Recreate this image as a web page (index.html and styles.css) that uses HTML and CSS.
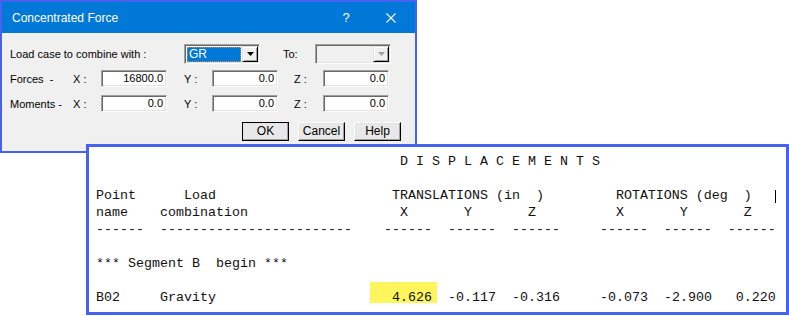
FILE: index.html
```html
<!DOCTYPE html>
<html>
<head>
<meta charset="utf-8">
<link rel="stylesheet" href="styles.css">
</head>
<body>
<div class="dialog">
  <div class="titlebar">
    <span class="title">Concentrated Force</span>
    <span class="help">?</span>
    <svg class="close" width="10" height="10" viewBox="0 0 10 10"><path d="M0.5 0.5L9.5 9.5M9.5 0.5L0.5 9.5" stroke="#fff" stroke-width="1.1" fill="none"/></svg>
  </div>
  <div class="body">
    <div class="row row1">
      <span class="lbl-load">Load case to combine with :</span>
      <div class="combo">
        <span class="sel">GR</span>
        <span class="dd"><svg width="7" height="4" viewBox="0 0 7 4"><path d="M0 0H7L3.5 4Z" fill="#000"/></svg></span>
      </div>
      <span class="lbl-to">To:</span>
      <div class="combo disabled">
        <span class="sel"></span>
        <span class="dd"><svg width="7" height="4" viewBox="0 0 7 4"><path d="M0 0H7L3.5 4Z" fill="#a0a0a0"/></svg></span>
      </div>
    </div>
    <div class="grid row2">
      <span>Forces &nbsp;-</span><span>X :</span><span class="edit">16800.0</span>
      <span class="pad-y">Y :</span><span class="edit">0.0</span>
      <span class="pad-z">Z :</span><span class="edit">0.0</span>
    </div>
    <div class="grid row3">
      <span>Moments -</span><span>X :</span><span class="edit">0.0</span>
      <span class="pad-y">Y :</span><span class="edit">0.0</span>
      <span class="pad-z">Z :</span><span class="edit">0.0</span>
    </div>
    <div class="buttons">
      <span class="btn default">OK</span>
      <span class="btn">Cancel</span>
      <span class="btn">Help</span>
    </div>
  </div>
</div>
<div class="panel">
  <div class="out">
    <div class="ln">                                      D I S P L A C E M E N T S</div>
    <div class="ln"> </div>
    <div class="ln">Point      Load                      TRANSLATIONS (in  )         ROTATIONS (deg  )   <span class="caret"></span></div>
    <div class="ln">name    combination                   X       Y       Z          X       Y       Z</div>
    <div class="ln">------  ------------------------    ------  ------  ------     ------  ------  ------</div>
    <div class="ln"> </div>
    <div class="ln">*** Segment B  begin ***</div>
    <div class="ln"> </div>
    <div class="ln">B02     Gravity                      <span class="hl">4.626</span>  -0.117  -0.316     -0.073  -2.900   0.220</div>
  </div>
</div>
</body>
</html>
```
FILE: styles.css
```css
body {
  margin: 0;
  width: 789px;
  height: 316px;
  position: relative;
  overflow: hidden;
  background: #fff;
}

.dialog {
  position: absolute;
  left: 0;
  top: 0;
  width: 417px;
  height: 153px;
  box-sizing: border-box;
  border: 2px solid #4762f0;
  background: #f0f0f0;
  font-family: "Liberation Sans", Arial, sans-serif;
  font-size: 11px;
  color: #000;
}

.titlebar {
  height: 31px;
  background: #0078d7;
  color: #fff;
  display: flex;
  align-items: center;
  padding: 0 19px 0 10px;
  font-size: 12px;
}

.title { flex: 1; }

.help {
  width: 10px;
  text-align: center;
  font-size: 13px;
}

.close {
  display: block;
  margin-left: 35px;
}

.body {
  padding: 11px 0 0 8px;
}

.row {
  display: flex;
  align-items: center;
}

.row1 { height: 20px; }

.lbl-load { width: 174px; }

.lbl-to {
  width: 32px;
  margin-left: 23px;
}

.combo {
  width: 76px;
  height: 20px;
  box-sizing: border-box;
  border: 1px solid;
  border-color: #a0a0a0 #fff #fff #a0a0a0;
  box-shadow: inset 1px 1px #696969, inset -1px -1px #e3e3e3;
  background: #fff;
  display: flex;
  padding: 1px;
}

.combo .sel {
  width: 54px;
  height: 15px;
  margin: 1px 1px 0 1px;
  box-sizing: border-box;
  background: #0078d7;
  color: #fff;
  font-size: 12px;
  line-height: 13px;
  padding-left: 1px;
  border: 1px dotted #d0903a;
}

.combo.disabled { background: #f0f0f0; }
.combo.disabled .sel {
  background: transparent;
  border: none;
}

.dd {
  width: 16px;
  height: 16px;
  box-sizing: border-box;
  border: 1px solid;
  border-color: #e3e3e3 #000 #000 #e3e3e3;
  box-shadow: inset 1px 1px #fff, inset -1px -1px #a0a0a0;
  background: #f0f0f0;
  display: flex;
  align-items: center;
  justify-content: center;
}

.dd svg { display: block; }

.grid {
  display: grid;
  grid-template-columns: 63px 28px 66px 45px 66px 45px 66px;
  align-items: center;
  height: 17px;
}

.row2 { margin-top: 6px; }
.row3 { margin-top: 8px; }

.pad-y { padding-left: 17px; }
.pad-z { padding-left: 16px; }

.edit {
  height: 17px;
  box-sizing: border-box;
  border: 1px solid;
  border-color: #a0a0a0 #fff #fff #a0a0a0;
  box-shadow: inset 1px 1px #696969, inset -1px -1px #e3e3e3;
  background: #fff;
  text-align: right;
  padding-right: 3px;
  line-height: 15px;
}

.buttons {
  display: flex;
  justify-content: flex-end;
  gap: 9px;
  padding-right: 14px;
  margin-top: 10px;
}

.btn {
  width: 47px;
  height: 19px;
  box-sizing: border-box;
  border: 1px solid;
  border-color: #fff #000 #000 #fff;
  box-shadow: inset -1px -1px #a0a0a0, inset 1px 1px #e3e3e3;
  background: #e8e8e8;
  text-align: center;
  line-height: 17px;
  font-size: 12px;
}

.btn.default {
  border-color: #000;
}

.panel {
  position: absolute;
  left: 86px;
  top: 144px;
  width: 703px;
  height: 171px;
  box-sizing: border-box;
  border: 3px solid #4762f0;
  background: #fff;
  padding: 6px 0 0 7px;
  isolation: isolate;
  overflow: hidden;
}

.out {
  font-family: "Liberation Mono", "Courier New", monospace;
  font-size: 13.333px;
  line-height: 17px;
  color: #111;
}

.ln {
  white-space: pre;
  height: 17px;
}

.hl {
  position: relative;
}

.hl::before {
  content: "";
  position: absolute;
  left: -22px;
  right: -5px;
  top: -8px;
  bottom: 2px;
  background: #fff65e;
  z-index: -1;
}

.caret {
  display: inline-block;
  width: 1px;
  height: 13px;
  background: #000;
  vertical-align: -4px;
  margin-left: -1px;
}
```
